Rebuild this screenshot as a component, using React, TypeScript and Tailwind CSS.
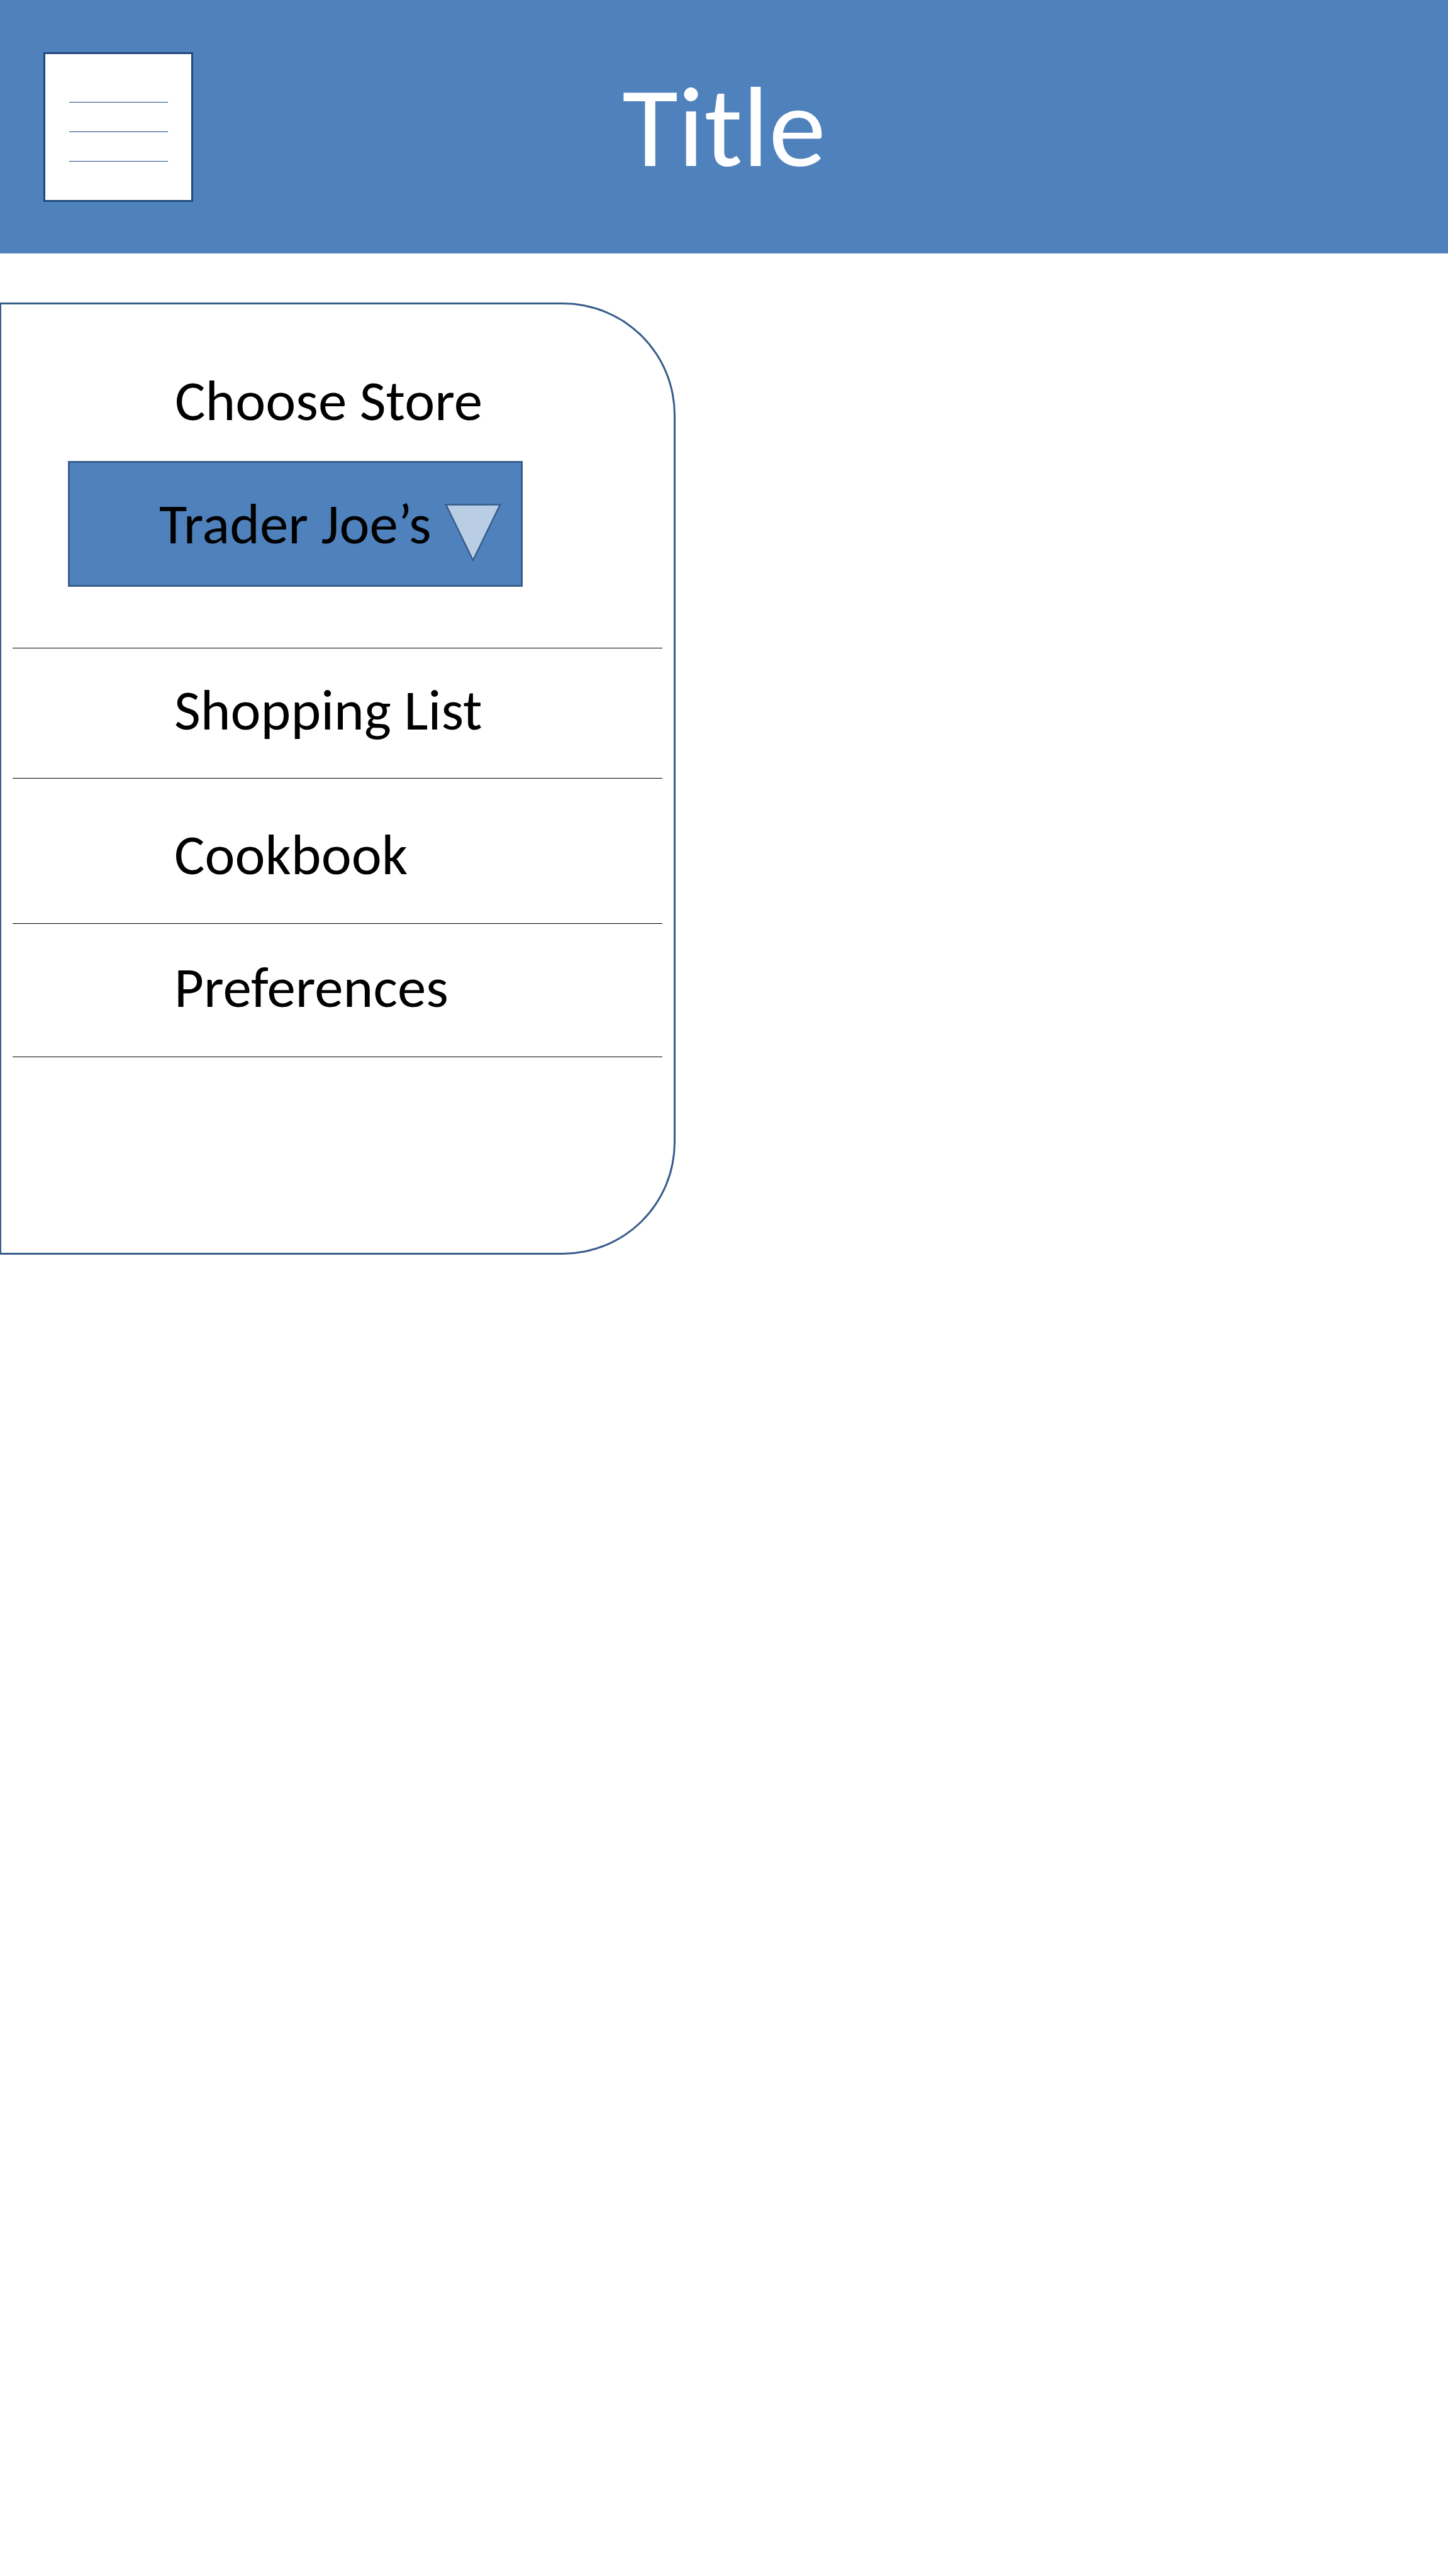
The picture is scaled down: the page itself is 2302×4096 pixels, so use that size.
const links = [
  { label: "Shopping List", spacing: "pt-[50px] pb-[60px]" },
  { label: "Cookbook", spacing: "pt-[73px] pb-[61px]" },
  { label: "Preferences", spacing: "pt-[53px] pb-[62px]" },
];

function Header() {
  return (
    <header className="grid h-[403px] grid-cols-[1fr_auto_1fr] items-center bg-[#4f81bd]">
      <button
        type="button"
        aria-label="Menu"
        className="ml-[69px] flex size-[238px] flex-col items-center justify-center gap-[46px] border-3 border-[#1f497d] bg-white pt-[16px]"
      >
        <span className="h-px w-[157px] bg-[#1f497d]" />
        <span className="h-px w-[157px] bg-[#1f497d]" />
        <span className="h-px w-[157px] bg-[#1f497d]" />
      </button>
      <h1 className="text-[182px] leading-[194px] text-white">Title</h1>
    </header>
  );
}

function StorePicker() {
  return (
    <div className="pt-[105px] pb-[97px]">
      <label htmlFor="store" className="block pl-[276px]">
        Choose Store
      </label>
      <div className="relative mt-[48px] mr-[240px] ml-[106px]">
        <select
          id="store"
          className="block h-[200px] w-full appearance-none border-3 border-[#385d8a] bg-[#4f81bd] pl-[142px] text-black"
        >
          <option>Trader Joe’s</option>
        </select>
        <svg
          aria-hidden="true"
          viewBox="0 0 90 94"
          className="pointer-events-none absolute top-[68px] right-[34px] h-[94px] w-[90px]"
        >
          <path d="M2 1.5H88L45 90Z" fill="#b9cde5" stroke="#385d8a" strokeWidth="2.5" />
        </svg>
      </div>
    </div>
  );
}

export default function App() {
  return (
    <div className="min-h-screen bg-white font-['Carlito','Lato',sans-serif] text-[91px] leading-[96px] text-black">
      <Header />
      <aside className="mt-[78px] w-[46.66%] rounded-r-[179px] border-3 border-l-2 border-[#385d8a] pb-[311px]">
        <StorePicker />
        <nav className="mx-[18px] border-t border-black">
          <ul>
            {links.map(({ label, spacing }) => (
              <li key={label} className="border-b border-black">
                <a href="#" className={`block pl-[257px] ${spacing}`}>
                  {label}
                </a>
              </li>
            ))}
          </ul>
        </nav>
      </aside>
    </div>
  );
}
